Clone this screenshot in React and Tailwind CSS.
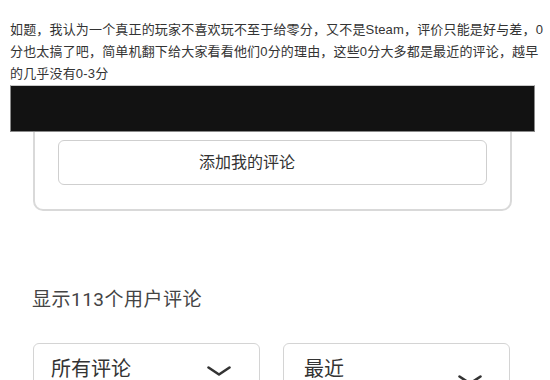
import React from 'react';

function Chevron({ className }) {
  return (
    <svg className={className} width="24" height="10" viewBox="0 0 24 10" fill="none">
      <polyline points="1.5,1.5 12,8.5 22.5,1.5" stroke="#333" strokeWidth="2.6" strokeLinecap="round" strokeLinejoin="round" />
    </svg>
  );
}

export default function App() {
  const mobileFont = { fontFamily: 'Roboto, "Noto Sans CJK SC", sans-serif' };

  return (
    <div className="h-[380px] w-[550px] overflow-hidden bg-white">

      {/* POST TEXT */}
      <div
        className="pt-[19px] pl-[10px] text-[13px] leading-[22px] tracking-[0.17px] text-[#333] whitespace-nowrap"
        style={{ fontFamily: '"Liberation Sans", "Noto Sans CJK SC", sans-serif' }}
      >
        <div>如题，我认为一个真正的玩家不喜欢玩不至于给零分，又不是Steam，评价只能是好与差，0</div>
        <div>分也太搞了吧，简单机翻下给大家看看他们0分的理由，这些0分大多都是最近的评论，越早</div>
        <div>的几乎没有0-3分</div>
      </div>

      {/* SCREENSHOT */}
      <div className="ml-[10px] w-[525px] h-[47px] bg-[#121212] border border-[#8a8a8a] border-t-[#c8c8c8]" />

      <div style={mobileFont}>
        <div className="ml-[33px] w-[479px] border-x-2 border-b-2 border-[#d9d9d9] rounded-b-[10px] px-[23px] pt-[8px] pb-[24px]">
          <div className="h-[45px] border-[1.5px] border-[#cfcfcf] rounded-[6px] flex items-center pl-[140px] text-[16px] text-[#333]">
            添加我的评论
          </div>
        </div>

        <div className="ml-[32px] mt-[77px] h-[24px] leading-[24px] text-[19px] tracking-[0.5px] text-[#444]">
          显示113个用户评论
        </div>

        <div className="mt-[31px] ml-[33px] flex gap-[23px]">
          <div className="w-[227px] h-[60px] border-[1.5px] border-[#d4d4d4] rounded-[6px] flex items-start justify-between pl-[17px] pr-[28px] pt-[13px]">
            <span className="text-[20px] leading-[24px] text-[#333]">所有评论</span>
            <Chevron className="mt-[9px]" />
          </div>
          <div className="w-[227px] h-[60px] border-[1.5px] border-[#d4d4d4] rounded-[6px] flex items-start justify-between pl-[20px] pr-[27px] pt-[13px]">
            <span className="text-[20px] leading-[24px] text-[#333]">最近</span>
            <Chevron className="mt-[18px]" />
          </div>
        </div>
      </div>

    </div>
  );
}
